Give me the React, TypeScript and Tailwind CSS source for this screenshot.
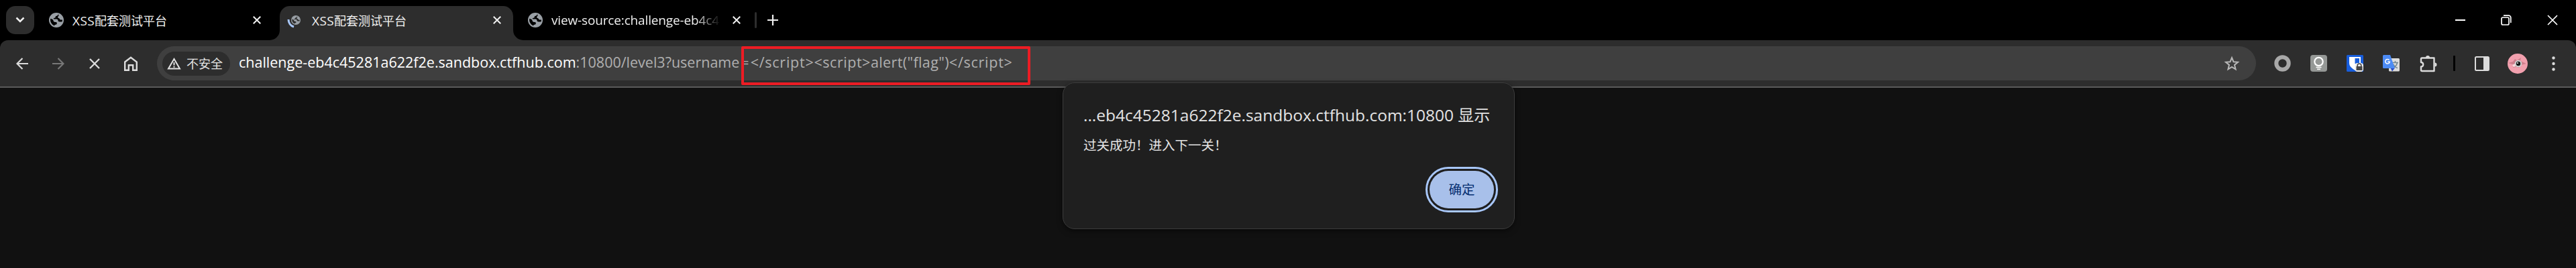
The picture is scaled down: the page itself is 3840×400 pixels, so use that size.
import React from "react";

const ui = "font-['Open_Sans','Noto_Sans_CJK_SC',sans-serif]";

function Globe({ className }: { className: string }) {
  return (
    <svg viewBox="0 0 22 22" className={className} fill="none">
      <circle cx="11" cy="11" r="10" stroke="#9aa0a6" strokeWidth="2" />
      <path
        d="M2 9C3 4.500 6.500 1.500 11 1.500l2.500.3c.3 1.700-.5 2.700-2 2.900-1.500.2-1.800.8-1.800 1.800S8.500 7.800 7.500 8s-1 1.500 0 1.500h4c1.500 0 2 1 2 2.300s1 1.700 2.500 1.700h4.300c-1 4.500-5 7-9.300 7-1.200 0-2.300-.3-3-.6.2-1.400.7-1.900 2-2.100 1.600-.3 1.800-1 1.800-2.100 0-1.400-.8-1.700-2.300-1.700-2 0-2.500-1-3-2.300C6 10 4.500 9.200 2 9z"
        fill="#9aa0a6"
      />
      <path d="M14.500 2.200c3.500 1.300 5.800 4.300 6 8.300h-3c-1.500 0-1.300-2-2.700-2.300-1.600-.3-2-1-1.500-2.100.5-1 1.700-1.400 1.200-3.900z" fill="#9aa0a6" />
    </svg>
  );
}

function Cross({ className, width = 2 }: { className: string; width?: number }) {
  return (
    <svg viewBox="0 0 16 16" className={className} fill="none" stroke="currentColor" strokeWidth={width}>
      <path d="M1 1l14 14M15 1L1 15" />
    </svg>
  );
}

function TabTitle() {
  return (
    <span className="whitespace-nowrap pt-[2px] leading-[26px]">
      <span className="text-[19px] tracking-[0.4px]">XSS</span>配套测试平台
    </span>
  );
}

function TabStrip() {
  return (
    <header className="flex h-[60px] shrink-0 items-center bg-black text-[18px] text-[#f0f0f0]">
      <button className="ml-[9px] flex size-[42px] items-center justify-center rounded-[14px] bg-[#2d2d2d]">
        <svg viewBox="0 0 14 10" className="h-[10px] w-[14px]" fill="none" stroke="#f0f0f0" strokeWidth="2.500">
          <path d="M1.500 1.500L7 7l5.500-5.500" />
        </svg>
      </button>
      <div className="ml-[22px] flex h-[42px] w-[329px] items-center gap-[13px]">
        <Globe className="size-[22px]" />
        <TabTitle />
        <Cross className="ml-auto mr-[13px] size-[12px]" width={2.700} />
      </div>
      <svg viewBox="0 0 15 15" className="ml-0 size-[15px] self-end" fill="#2d2d2d">
        <path d="M15 0v15H0A15 15 0 0 0 15 0z" />
      </svg>
      <div className="flex h-[51px] w-[348px] items-center self-end rounded-t-[15px] bg-[#2d2d2d] pb-[9px]">
        <div className="ml-[11px] mr-[16px] flex w-[21px] items-center">
          <svg viewBox="0 0 11 14" className="mt-[10px] h-[14px] w-[11px]" fill="none" stroke="#a8c7fa" strokeWidth="3">
            <path d="M2 1c0 5 3 9.500 8 11" />
          </svg>
          <Globe className="-ml-[5px] size-[14px]" />
        </div>
        <TabTitle />
        <Cross className="ml-auto mr-[18px] size-[12px]" width={2.700} />
      </div>
      <svg viewBox="0 0 15 15" className="size-[15px] self-end" fill="#2d2d2d">
        <path d="M0 0v15h15A15 15 0 0 1 0 0z" />
      </svg>
      <Globe className="ml-[7px] size-[22px]" />
      <span className="ml-[13px] w-[252px] overflow-hidden whitespace-nowrap pt-px text-[19px] tracking-[-0.15px] [mask-image:linear-gradient(to_right,black_215px,transparent_252px)]">
        view-source:challenge-eb4c4
      </span>
      <Cross className="ml-[18px] size-[12px]" width={2.700} />
      <i className="ml-[21px] h-[24px] w-[3px] rounded bg-[#2d2d2d]" />
      <svg viewBox="0 0 16 16" className="ml-[16px] size-[16px]" stroke="#f0f0f0" strokeWidth="2.200">
        <path d="M8 0v16M0 8h16" />
      </svg>
      <div className="ml-auto mr-[27px] flex items-center gap-[53px] text-white">
        <i className="h-[2px] w-[15px] bg-white" />
        <svg viewBox="0 0 16 16" className="size-[16px]" fill="none" stroke="white" strokeWidth="1.700">
          <rect x="1" y="4" width="11" height="11" rx="2" />
          <path d="M4 1.200h7.500a3.300 3.300 0 0 1 3.300 3.300V12" />
        </svg>
        <Cross className="size-[16px]" width={1.600} />
      </div>
    </header>
  );
}

function Omnibox() {
  return (
    <div className="relative ml-[29px] flex h-[51px] w-[3129px] items-center rounded-full bg-[#3f3f3f]">
      <div className="ml-[8px] flex h-[36px] w-[101px] items-center rounded-full bg-[#2d2d2d] text-[18px] text-[#e3e3e3]">
        <svg viewBox="0 0 21 18" className="ml-[7px] h-[18px] w-[21px]" fill="none" stroke="#e3e3e3" strokeWidth="2">
          <path d="M10.500 2L2 16.500h17z" />
          <path d="M10.500 7v4.500M10.500 12.800v2" />
        </svg>
        <span className="ml-[8px] whitespace-nowrap pt-[2px]">不安全</span>
      </div>
      <div className="ml-[13px] flex items-center whitespace-pre pb-[2px] text-[21.5px] text-[#b0b0b0]">
        <span className="text-white">challenge-eb4c45281a622f2e.sandbox.ctfhub.com</span>
        <span>:10800/level3?username</span>
        <span className="px-[2px]">=</span>
        <span className="tracking-[0.75px]">{"</script>"}</span>
        <span className="tracking-[0.54px]">{"<script>"}</span>
        <span className="tracking-[0.38px]">{'alert("flag")'}</span>
        <span className="tracking-[0.75px]">{"</script>"}</span>
      </div>
      <i className="absolute left-[871px] top-0 h-[58px] w-[431px] rounded-[2px] border-4 border-[#ed1c24]" />
      <svg viewBox="0 0 24 24" className="ml-auto mr-[24px] size-[24px]" fill="none" stroke="#b8b8b8" strokeWidth="2">
        <path d="M12 3.200l2.500 6 6.500.5-5 4.200 1.600 6.400L12 16.900l-5.600 3.400L8 13.900 3 9.700l6.500-.5z" />
      </svg>
    </div>
  );
}

function Extensions() {
  return (
    <div className="ml-[27px] flex items-center">
      <svg viewBox="0 0 25 25" className="size-[25px]" fill="none" stroke="#a8a8a8" strokeWidth="6">
        <circle cx="12.500" cy="12.500" r="9.200" />
      </svg>
      <svg viewBox="0 0 25 25" className="ml-[29px] size-[25px]" fill="none">
        <rect width="25" height="25" rx="4" fill="#959896" />
        <circle cx="12.500" cy="10" r="6.200" stroke="white" strokeWidth="2.200" />
        <path d="M8.500 18.600h8M10 21.300h5" stroke="white" strokeWidth="1.500" />
      </svg>
      <svg viewBox="0 0 25 25" className="ml-[29px] size-[25px]">
        <rect width="25" height="25" rx="1.500" fill="#175ddc" />
        <path d="M4 3h17v9c0 5-4 8-8.500 11C8 20 4 17 4 12z" fill="white" />
        <path d="M12.500 5H19v8h-6.500z" fill="#175ddc" />
        <rect x="12.500" y="12" width="12.500" height="13" rx="4" fill="#eeeeee" />
        <rect x="14.500" y="17" width="9" height="6" rx=".5" fill="#454545" />
        <path d="M16.200 17.500v-1.700a2.800 2.800 0 0 1 5.600 0v1.700" fill="none" stroke="#454545" strokeWidth="1.600" />
      </svg>
      <svg viewBox="0 0 25 25" className="ml-[29px] size-[25px]">
        <rect x="9" y="5" width="16" height="19.500" rx="1.500" fill="#dcdcdc" />
        <path d="M14 11.500h9M18.500 9v2.500M21.500 12c-.8 3-3.500 6-6 7.500M16 14c1 2.500 3.500 5 6 5.500" fill="none" stroke="#6f8590" strokeWidth="1.500" />
        <path d="M11.500 19.500H18l-4 5z" fill="#2a4bc0" />
        <path d="M1.500 0H11l7 20H1.500A1.500 1.500 0 0 1 0 18.500V1.500A1.500 1.500 0 0 1 1.500 0z" fill="#4c8bf5" />
        <path d="M9.600 7.600A3.300 3.300 0 1 0 10.300 10.300H7.300" fill="none" stroke="white" strokeWidth="1.500" />
      </svg>
      <svg viewBox="0 0 26 26" className="ml-[30px] size-[26px]" fill="none" stroke="#dcdcdc" strokeWidth="2.400">
        <path d="M3.500 4.500h18v19.500h-18a1.500 1.500 0 0 1-1.500-1.500v-5c2 0 3.200-1.300 3.200-3.200S4 11 2 11V6a1.500 1.500 0 0 1 1.500-1.500z" strokeLinejoin="round" />
        <path d="M9 4a3 3 0 0 1 6 0zM22.500 11.500a3 3 0 0 1 0 6z" fill="#dcdcdc" stroke="none" />
      </svg>
      <i className="ml-[24px] h-[23px] w-[3px] rounded-[1px] bg-black" />
      <svg viewBox="0 0 22 22" className="ml-[29px] size-[22px]">
        <rect x="1" y="1" width="20" height="20" rx="1.500" fill="none" stroke="#dcdcdc" strokeWidth="2" />
        <path d="M13 1h8v20h-8z" fill="#dcdcdc" />
      </svg>
      <svg viewBox="0 0 30 30" className="ml-[27px] size-[30px]">
        <circle cx="15" cy="15" r="15" fill="#f2a0ae" />
        <path d="M1 14l7-2 3-4 3 2 6-4-1 5 9 4-8 2-3 4-4-1-5 1 2-4z" fill="#cf7f8c" />
        <path d="M7 17l4-2 1 4-3 1z" fill="#f8dadd" />
        <circle cx="16" cy="15" r="5.300" fill="#cfcfcf" />
        <circle cx="16" cy="15" r="3.200" fill="#161616" />
        <circle cx="15" cy="14" r="1" fill="white" />
      </svg>
      <svg viewBox="0 0 5 22" className="ml-[36px] h-[22px] w-[5px]" fill="#dcdcdc">
        <circle cx="2.500" cy="2.500" r="2.200" />
        <circle cx="2.500" cy="11" r="2.200" />
        <circle cx="2.500" cy="19.500" r="2.200" />
      </svg>
    </div>
  );
}

function Toolbar() {
  return (
    <div className="bg-black">
      <nav className="rounded-t-[12px] bg-[#2d2d2d] text-[#dcdcdc]">
        <div className="flex h-[69px] items-center">
          <svg viewBox="0 0 18 18" className="ml-[24px] size-[18px]" fill="none" stroke="#dcdcdc" strokeWidth="2.200">
            <path d="M18 9H2M9.500 1L1.500 9l8 8" />
          </svg>
          <svg viewBox="0 0 18 18" className="ml-[36px] size-[18px]" fill="none" stroke="#777777" strokeWidth="2.200">
            <path d="M0 9h16M8.500 1l8 8-8 8" />
          </svg>
          <Cross className="ml-[37px] size-[16px]" width={2.400} />
          <svg viewBox="0 0 20 22" className="ml-[36px] h-[22px] w-[20px]" fill="none" stroke="#dcdcdc" strokeWidth="2.400">
            <path d="M1.200 8.500L10 1.700l8.800 6.800v12.200h-5.600V13.200H6.800v7.500H1.200z" />
          </svg>
          <Omnibox />
          <Extensions />
        </div>
        <div className="h-[2px] bg-[#5a5a5a]" />
      </nav>
    </div>
  );
}

function Dialog() {
  return (
    <section className="absolute left-[1584px] top-[123px] flex h-[219px] w-[674px] flex-col rounded-[18px] border border-[#3c3c3c] bg-[#1f1f1f] pl-[30px] pr-[24px] text-[#e3e3e3] shadow-[0_3px_8px_rgba(0,0,0,0.5)]">
      <h1 className="mt-[30px] flex h-[36px] items-center whitespace-nowrap text-[24px]">
        <span>
          <span className="text-[24.5px]">...eb4c45281a622f2e.sandbox.ctfhub.com:10800</span> 显示
        </span>
      </h1>
      <p className="mt-[14px] flex h-[26px] items-center whitespace-nowrap text-[19.500px]">过关成功！进入下一关！</p>
      <button className="mt-[19px] flex h-[68px] w-[108px] items-center justify-center self-end rounded-full border-[3px] border-[#a8c7fa] text-[19.500px] text-[#062e6f]">
        <span className="flex h-[56px] w-[96px] items-center justify-center rounded-full bg-[#a8c0ea]">确定</span>
      </button>
    </section>
  );
}

export default function App() {
  return (
    <main className={"relative flex h-[400px] w-[3840px] flex-col overflow-hidden bg-[#111111] " + ui}>
      <TabStrip />
      <Toolbar />
      <Dialog />
    </main>
  );
}
